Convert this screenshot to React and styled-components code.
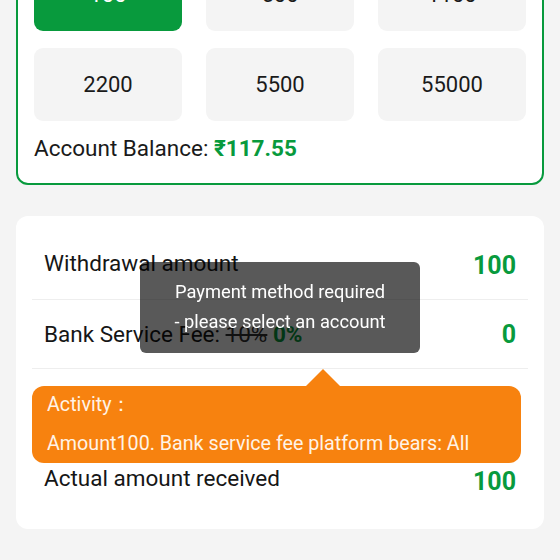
import React from 'react';
import styled, { createGlobalStyle } from 'styled-components';

const GlobalStyle = createGlobalStyle`
  html, body {
    margin: 0;
    padding: 0;
    background: #f4f4f4;
    font-family: Roboto, 'Liberation Sans', sans-serif;
    overflow: hidden;
  }
`;

const Page = styled.div`
  margin-top: -60px;
  padding: 0 16px;
  display: flex;
  flex-direction: column;
  gap: 31px;
`;

const AmountCard = styled.div`
  background: #fff;
  border: 2px solid #089a3d;
  border-radius: 12px;
  padding: 16px 16px 20px;
`;

const AmountGrid = styled.div`
  display: grid;
  grid-template-columns: repeat(3, 1fr);
  column-gap: 24px;
  row-gap: 17px;
`;

const AmountButton = styled.div`
  height: 73px;
  border-radius: 9px;
  display: flex;
  align-items: center;
  justify-content: center;
  font-size: 22px;
  color: ${p => (p.$active ? '#fff' : '#1a1a1a')};
  background: ${p => (p.$active ? '#089a3d' : '#f4f4f4')};
`;

const Balance = styled.div`
  margin-top: 12px;
  font-size: 22.5px;
  color: #1a1a1a;
  line-height: 30px;
`;

const BalanceValue = styled.span`
  color: #089a3d;
  font-weight: 700;
`;

const SummaryCard = styled.div`
  background: #fff;
  border-radius: 12px;
  padding: 15px 16px 30px;
`;

const Row = styled.div`
  display: flex;
  justify-content: space-between;
  align-items: center;
  padding: 0 12px;
  height: ${p => p.$h || 68}px;
  border-bottom: ${p => (p.$divider ? '1px solid #eeeeee' : 'none')};
`;

const Label = styled.div`
  font-size: 22.5px;
  color: #161616;
  margin-top: ${p => p.$shift || 0}px;
`;

const Value = styled.div`
  font-size: 25px;
  font-weight: 700;
  color: #089a3d;
`;

const Strike = styled.span`
  text-decoration: line-through;
  color: #333;
`;

const Zero = styled.span`
  color: #089a3d;
  font-weight: 700;
`;

const Activity = styled.div`
  position: relative;
  margin: 17px 7px 0 0;
  background: #f7820f;
  border-radius: 12px;
  padding: 0 15px;
  color: #fff3e6;
  font-size: 19.7px;
  line-height: 38.5px;

  &::before {
    content: '';
    position: absolute;
    top: -17px;
    left: 274px;
    border-left: 17px solid transparent;
    border-right: 17px solid transparent;
    border-bottom: 17px solid #f7820f;
  }
`;

const Toast = styled.div`
  position: fixed;
  top: 262px;
  left: 140px;
  width: 280px;
  height: 91px;
  box-sizing: border-box;
  padding: 15px 10px;
  border-radius: 6px;
  background: rgba(0, 0, 0, 0.65);
  color: #fff;
  font-size: 18.3px;
  line-height: 30px;
  text-align: center;
`;

const amounts = ['100', '500', '1100', '2200', '5500', '55000'];

const App = () => {
  return (
    <>
      <GlobalStyle />
      <Page>
        <AmountCard>
          <AmountGrid>
            {amounts.map((a, i) => (
              <AmountButton key={a} $active={i === 0}>{a}</AmountButton>
            ))}
          </AmountGrid>
          <Balance>
            Account Balance: <BalanceValue>₹117.55</BalanceValue>
          </Balance>
        </AmountCard>

        <SummaryCard>
          <Row $divider>
            <Label $shift={-4}>Withdrawal amount</Label>
            <Value>100</Value>
          </Row>
          <Row $divider>
            <Label>
              Bank Service Fee: <Strike>10%</Strike> <Zero>0%</Zero>
            </Label>
            <Value>0</Value>
          </Row>
          <Activity>
            <div>Activity：</div>
            <div>Amount100. Bank service fee platform bears: All</div>
          </Activity>
          <Row $h={36}>
            <Label $shift={-6}>Actual amount received</Label>
            <Value>100</Value>
          </Row>
        </SummaryCard>
      </Page>
      <Toast>
        Payment method required
        <br />
        - please select an account
      </Toast>
    </>
  );
};

export default App;
